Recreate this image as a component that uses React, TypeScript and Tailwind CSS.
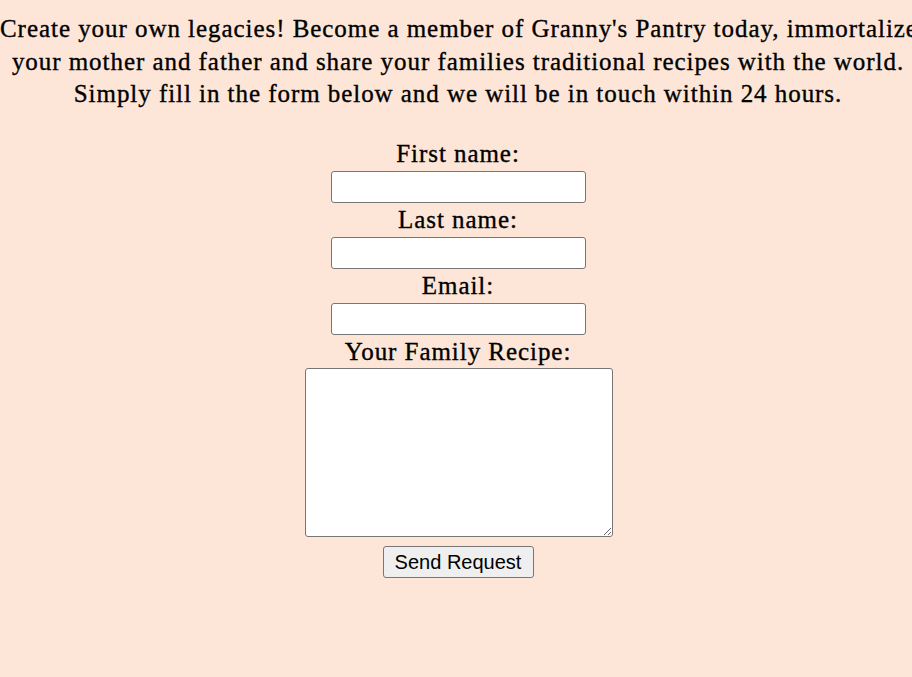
export default function App() {
  const serif = "font-['Liberation_Serif','Times_New_Roman',serif] [-webkit-text-stroke:0.35px_black]";
  return (
    <div className={`min-h-[677px] w-full overflow-hidden bg-[#fde6d8] text-black ${serif}`}>
      <div className="w-[916px]">
        <p className="pt-[13px] text-center text-[25px] leading-[32.5px] tracking-[0.95px] whitespace-nowrap">
          Create your own legacies! Become a member of Granny's Pantry today, immortalize
          <br />
          your mother and father and share your families traditional recipes with the world.
          <br />
          Simply fill in the form below and we will be in touch within 24 hours.
        </p>

        <form className="mt-[26px] flex flex-col items-center text-[25px] tracking-[0.95px]">
          <label className="leading-[34px]">First name:</label>
          <input className="h-[32px] w-[255px] rounded-[3px] border border-[#767676] bg-white" />
          <label className="leading-[34px]">Last name:</label>
          <input className="h-[32px] w-[255px] rounded-[3px] border border-[#767676] bg-white" />
          <label className="leading-[34px]">Email:</label>
          <input className="h-[32px] w-[255px] rounded-[3px] border border-[#767676] bg-white" />
          <label className="leading-[33px]">Your Family Recipe:</label>
          <textarea className="ml-[1px] h-[169px] w-[308px] rounded-[3px] border border-[#767676] bg-white" />
          <button
            type="button"
            className="mt-[9px] h-[32px] w-[151px] rounded-[3px] border border-[#767676] bg-[#efefef] font-['Liberation_Sans',Arial,sans-serif] text-[20px] leading-none tracking-normal [-webkit-text-stroke:0px]"
          >
            Send Request
          </button>
        </form>
      </div>
    </div>
  );
}
